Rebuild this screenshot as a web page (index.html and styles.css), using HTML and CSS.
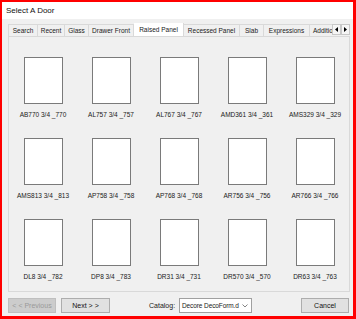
FILE: index.html
```html
<!DOCTYPE html>
<html lang="en">
<head>
    <meta charset="UTF-8">
    <title>Select A Door</title>
    <link rel="stylesheet" href="styles.css">
</head>
<body>
    <div class="window">
        <div class="titlebar">Select A Door</div>
        <div class="content">
            <div class="tabbar">
                <div class="tabs">
                    <div class="tab">Search</div>
                    <div class="tab">Recent</div>
                    <div class="tab">Glass</div>
                    <div class="tab">Drawer Front</div>
                    <div class="tab active">Raised Panel</div>
                    <div class="tab">Recessed Panel</div>
                    <div class="tab">Slab</div>
                    <div class="tab">Expressions</div>
                    <div class="tab">Additional</div>
                </div>
                <div class="scroll">
                    <div class="arrow"><svg width="5" height="5" viewBox="0 0 5 5"><path d="M4 0 L1 2.5 L4 5 Z" fill="#000"/></svg></div>
                    <div class="arrow"><svg width="5" height="5" viewBox="0 0 5 5"><path d="M1 0 L4 2.5 L1 5 Z" fill="#000"/></svg></div>
                </div>
            </div>

            <div class="panel">
                <div class="grid">
                    <div class="cell"><div class="door"></div><div class="name">AB770 3/4 _770</div></div>
                    <div class="cell"><div class="door"></div><div class="name">AL757 3/4 _757</div></div>
                    <div class="cell"><div class="door"></div><div class="name">AL767 3/4 _767</div></div>
                    <div class="cell"><div class="door"></div><div class="name">AMD361 3/4 _361</div></div>
                    <div class="cell"><div class="door"></div><div class="name">AMS329 3/4 _329</div></div>
                    <div class="cell"><div class="door"></div><div class="name">AMS813 3/4 _813</div></div>
                    <div class="cell"><div class="door"></div><div class="name">AP758 3/4 _758</div></div>
                    <div class="cell"><div class="door"></div><div class="name">AP768 3/4 _768</div></div>
                    <div class="cell"><div class="door"></div><div class="name">AR756 3/4 _756</div></div>
                    <div class="cell"><div class="door"></div><div class="name">AR766 3/4 _766</div></div>
                    <div class="cell"><div class="door"></div><div class="name">DL8 3/4 _782</div></div>
                    <div class="cell"><div class="door"></div><div class="name">DP8 3/4 _783</div></div>
                    <div class="cell"><div class="door"></div><div class="name">DR31 3/4 _731</div></div>
                    <div class="cell"><div class="door"></div><div class="name">DR570 3/4 _570</div></div>
                    <div class="cell"><div class="door"></div><div class="name">DR63 3/4 _763</div></div>
                </div>
            </div>

            <div class="footer">
                <button class="btn prev" disabled>&lt; &lt; Previous</button>
                <button class="btn next">Next &gt; &gt;</button>
                <span class="catalog-label">Catalog:</span>
                <div class="select">
                    <span class="select-text">Decore DecoForm.d</span>
                    <svg width="6" height="4" viewBox="0 0 6 4"><path d="M0.5 0.5 L3 3 L5.5 0.5" fill="none" stroke="#666" stroke-width="0.8"/></svg>
                </div>
                <button class="btn cancel">Cancel</button>
            </div>
        </div>
    </div>
</body>
</html>
```

FILE: styles.css
```css
body {
    margin: 0;
    font-family: "Liberation Sans", Arial, sans-serif;
    color: #1a1a1a;
}
.window {
    width: 356px;
    height: 319px;
    box-sizing: border-box;
    border: 2px solid #f00;
    border-right-width: 3px;
    border-bottom-width: 3px;
    background: #f0f0f0;
    display: flex;
    flex-direction: column;
}
.titlebar {
    height: 17px;
    line-height: 17px;
    padding-left: 4px;
    background: #fff;
    font-size: 8px;
    color: #111;
}
.content {
    padding: 4px 3px 0 6px;
}
.tabbar {
    display: flex;
    height: 13px;
    position: relative;
    z-index: 1;
}
.tabs {
    display: flex;
    overflow: hidden;
    flex: 1;
    min-width: 0;
}
.tab {
    flex: none;
    height: 12px;
    margin-top: 1px;
    box-sizing: border-box;
    line-height: 11px;
    font-size: 6.5px;
    text-align: center;
    border: 1px solid #d9d9d9;
    border-left: none;
    border-bottom: none;
    background: #f0f0f0;
    white-space: nowrap;
    overflow: hidden;
}
.tab:first-child {
    border-left: 1px solid #d9d9d9;
}
.tab:nth-child(1) { width: 30px; }
.tab:nth-child(2) { width: 27px; }
.tab:nth-child(3) { width: 24px; }
.tab:nth-child(4) { width: 45px; }
.tab:nth-child(5) { width: 50px; }
.tab:nth-child(6) { width: 56px; }
.tab:nth-child(7) { width: 24px; }
.tab:nth-child(8) { width: 46px; }
.tab:nth-child(9) { width: 40px; text-align: left; padding-left: 3px; }
.tab.active {
    height: 14px;
    margin-top: -1px;
    line-height: 14px;
    background: #fff;
}
.scroll {
    display: flex;
    flex: none;
    margin-top: 1px;
}
.arrow {
    width: 9px;
    height: 11px;
    box-sizing: border-box;
    border: 1px solid #c8c8c8;
    background: #f5f5f5;
    display: flex;
    align-items: center;
    justify-content: center;
}
.panel {
    height: 256px;
    box-sizing: border-box;
    border: 1px solid #d9d9d9;
    background: #f0f0f0;
}
.grid {
    display: grid;
    grid-template-columns: repeat(5, 1fr);
    row-gap: 19px;
    padding-top: 20px;
}
.cell {
    display: flex;
    flex-direction: column;
    align-items: center;
}
.door {
    width: 39px;
    height: 47px;
    box-sizing: border-box;
    border: 1px solid #7a7a7a;
    background: #fff;
}
.name {
    margin-top: 6px;
    font-size: 6.5px;
    line-height: 9px;
    white-space: nowrap;
}
.footer {
    display: flex;
    align-items: center;
    margin-top: 6px;
    height: 15px;
}
.btn {
    height: 15px;
    box-sizing: border-box;
    padding: 0;
    font-family: inherit;
    font-size: 7px;
    background: #e1e1e1;
    border: 1px solid #adadad;
    color: #111;
}
.prev {
    width: 48px;
    background: #cccccc;
    border-color: #bfbfbf;
    color: #9a9a9a;
}
.next {
    width: 49px;
    margin-left: 5px;
}
.catalog-label {
    margin-left: 39px;
    width: 30px;
    font-size: 7px;
}
.select {
    width: 73px;
    height: 15px;
    box-sizing: border-box;
    border: 1px solid #a0a0a0;
    background: #fff;
    display: flex;
    align-items: center;
    justify-content: space-between;
    padding: 0 3px 0 2px;
    font-size: 6.5px;
    white-space: nowrap;
}
.select-text {
    letter-spacing: -0.1px;
}
.cancel {
    width: 48px;
    margin-left: 49px;
}
```
